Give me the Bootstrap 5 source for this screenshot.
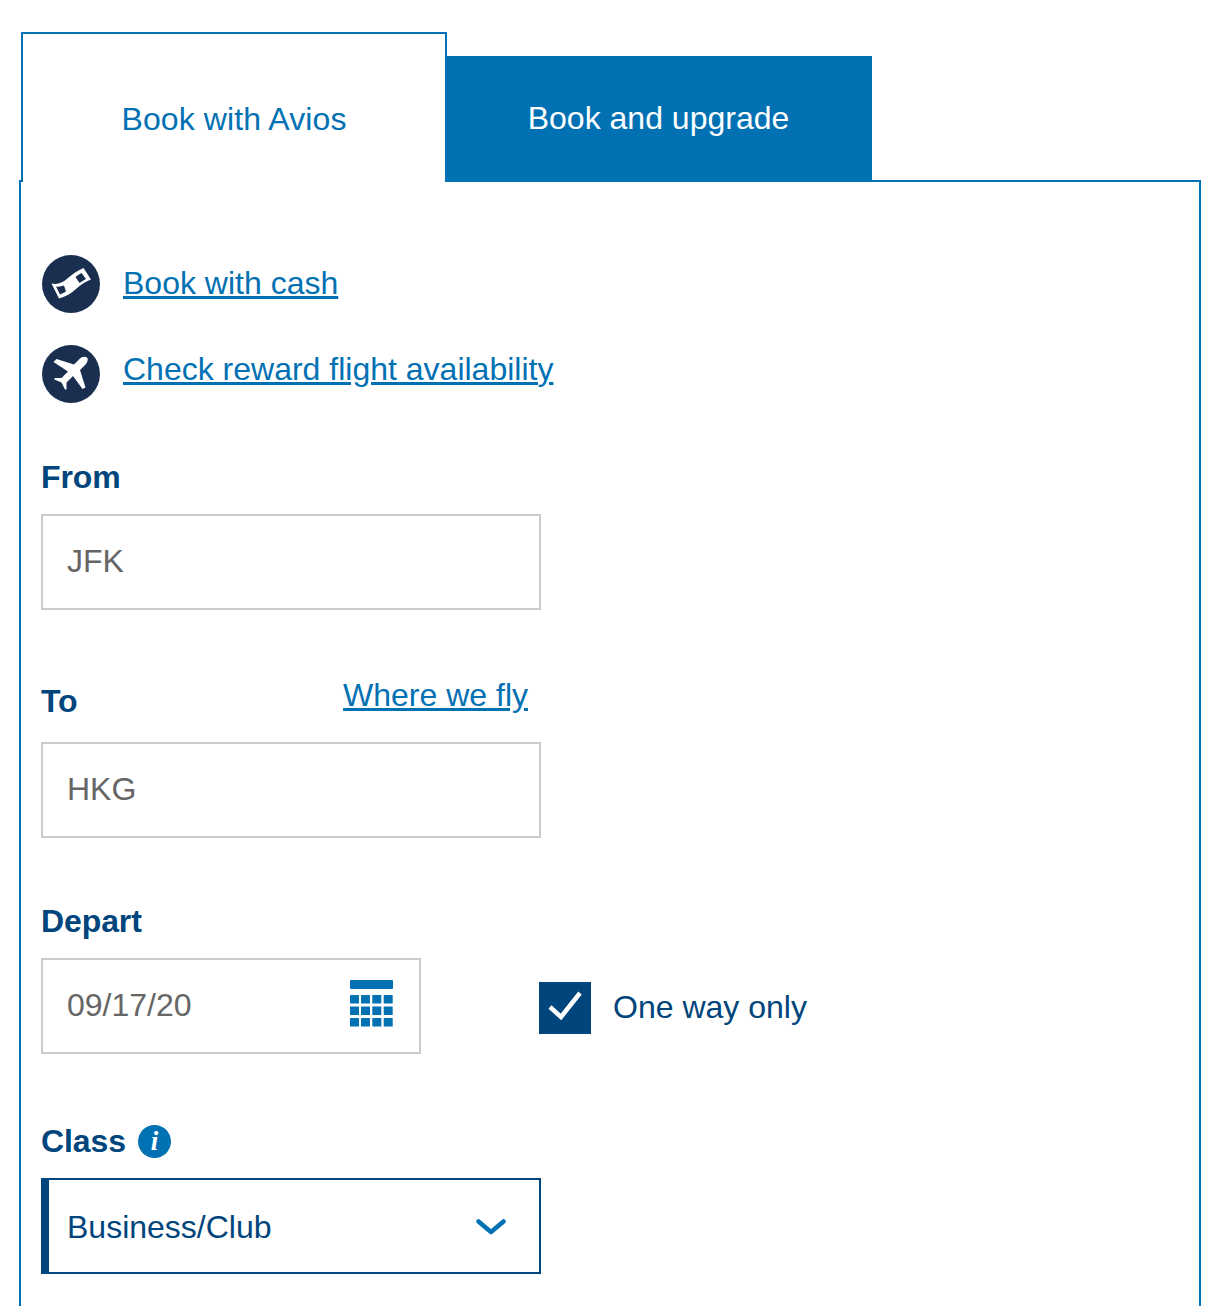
<!DOCTYPE html>
<html lang="en">
<head>
  <meta charset="UTF-8">
  <title>Book with Avios</title>
  <link href="https://cdn.jsdelivr.net/npm/bootstrap@5.3.3/dist/css/bootstrap.min.css" rel="stylesheet">
  <style>
    html, body { height: 1308px; overflow: hidden; }
    body { font-family: "Liberation Sans", Arial, sans-serif; font-size: 32px; color: #00457c; background: #fff; }
    a { color: #0271b3; }

    .booking { padding: 32px 19px 0 19px; }
    .tabs-row { height: 150px; align-items: flex-end; position: relative; z-index: 1; margin-bottom: -2px; }
    .tab-on, .tab-off { display: flex; align-items: center; justify-content: center; text-decoration: none; }
    .tab-on { width: 426px; height: 150px; margin-left: 2px; padding-top: 22px; border: 2px solid #0271b3; border-bottom: 0; background: #fff; color: #0271b3; letter-spacing: .1px; }
    .tab-off { width: 427px; height: 126px; margin-left: -2px; background: #0271b3; color: #fff; padding-bottom: 2px; }

    .panel-box { border: 2px solid #0271b3; border-bottom: 0; height: 1126px; padding: 72px 20px 0 20px; }

    .round-icon { width: 58px; height: 58px; margin: 1px 0 0 1px; border-radius: 50%; background: #1a2f50; flex-shrink: 0; }
    .link-row { gap: 23px; height: 59px; }
    .link-row + .link-row { margin-top: 31px; }
    .link-row a { position: relative; top: -1px; }
    .link-row + .link-row a { top: -5px; }

    .field-label { font-weight: 700; line-height: 36px; letter-spacing: -.1px; }
    .field-box { width: 500px; height: 96px; border: 2px solid #ccc; padding: 0 24px 2px; color: #666; display: flex; align-items: center; justify-content: space-between; }
    .from-group { margin-top: 56px; }
    .from-group .field-label { margin-bottom: 19px; }
    .to-group { margin-top: 70px; width: 500px; }
    .to-head { height: 62px; }
    .to-head a { margin-right: 13px; position: relative; top: -16px; }
    .to-head .field-label { position: relative; top: -10px; }
    .depart-group { margin-top: 65px; }
    .depart-group .field-label { margin-bottom: 19px; }
    .date-box { width: 380px; padding-right: 26px; }
    .date-box svg { margin-bottom: 3px; }
    .way-check { width: 52px; height: 52px; background: #00457c; flex-shrink: 0; }
    .way-row { margin-left: 118px; gap: 22px; position: relative; top: 2px; }
    .way-row span { position: relative; top: -1px; }
    .class-group { margin-top: 69px; }
    .class-head { gap: 12px; height: 36px; margin-bottom: 19px; }
    .info-dot { width: 33px; height: 33px; border-radius: 50%; background: #0271b3; color: #fff; font: italic 700 27px/33px "Liberation Serif", serif; text-align: center; }
    .class-select { width: 500px; height: 96px; border: 2px solid #00457c; border-left-width: 8px; padding: 2px 33px 0 18px; }
  </style>
</head>
<body>

  <div class="booking">
    <div class="tabs-row d-flex">
      <a class="tab-on" href="#">Book with Avios</a>
      <a class="tab-off" href="#">Book and upgrade</a>
    </div>

    <div class="panel-box">
      <div class="link-row d-flex align-items-center">
        <div class="round-icon">
          <svg class="d-block" width="58" height="58" viewBox="0 0 58 58">
            <path fill="#fff" d="M9.500 28.500C16 30 21 27.500 26 23C31 18.500 36 15.500 41.500 13L49 24.500C43.500 26.500 39 29.500 34.500 33.500C29 38.500 24 41.500 17 43.500Z"/>
            <path fill="#1a2f50" d="M14 31.500C17 32 19.500 31.500 22 30.500L24 36.500C22 37.700 20.500 38.500 18 39.500Z"/>
            <path fill="#1a2f50" d="M33.500 22C35.500 20.500 37.500 19 39.500 18L44 24C41.500 25.200 39.500 26.500 37.500 28Z"/>
          </svg>
        </div>
        <a href="#">Book with cash</a>
      </div>
      <div class="link-row d-flex align-items-center">
        <div class="round-icon">
          <svg class="d-block" width="58" height="58" viewBox="0 0 58 58">
            <path fill="#fff" d="M45 12.500C46.500 14 45.500 17.500 43.500 19.500L38 25L43.500 42.500L40.500 44L31 31L24.500 37.500L24.500 44.500L23 44.500L19.500 37.500L12.500 34.500L12.500 33L19.500 33L26 26.500L11.500 17L14.500 14L32 19.500L37.500 14C39.500 12 43 11 45 12.500Z"/>
          </svg>
        </div>
        <a href="#">Check reward flight availability</a>
      </div>

      <div class="from-group">
        <div class="field-label">From</div>
        <div class="field-box">JFK</div>
      </div>

      <div class="to-group">
        <div class="to-head d-flex justify-content-between align-items-center">
          <span class="field-label">To</span>
          <a href="#">Where we fly</a>
        </div>
        <div class="field-box">HKG</div>
      </div>

      <div class="depart-group">
        <div class="field-label">Depart</div>
        <div class="d-flex align-items-center">
          <div class="field-box date-box">
            <span>09/17/20</span>
            <svg width="43" height="47" viewBox="0 0 43 47" fill="#0271b3">
              <rect x="0" y="0" width="43" height="9" rx="1"/>
              <rect x="0" y="15" width="9" height="8.500" rx=".5"/><rect x="11" y="15" width="9" height="8.500" rx=".5"/><rect x="22.300" y="15" width="9" height="8.500" rx=".5"/><rect x="33.700" y="15" width="9" height="8.500" rx=".5"/>
              <rect x="0" y="26.500" width="9" height="8.500" rx=".5"/><rect x="11" y="26.500" width="9" height="8.500" rx=".5"/><rect x="22.300" y="26.500" width="9" height="8.500" rx=".5"/><rect x="33.700" y="26.500" width="9" height="8.500" rx=".5"/>
              <rect x="0" y="38" width="9" height="8.500" rx=".5"/><rect x="11" y="38" width="9" height="8.500" rx=".5"/><rect x="22.300" y="38" width="9" height="8.500" rx=".5"/><rect x="33.700" y="38" width="9" height="8.500" rx=".5"/>
            </svg>
          </div>
          <div class="way-row d-flex align-items-center">
            <div class="way-check">
              <svg class="d-block" width="52" height="52" viewBox="0 0 52 52"><path d="M11 25l11 10 19-24" fill="none" stroke="#fff" stroke-width="4.500"/></svg>
            </div>
            <span>One way only</span>
          </div>
        </div>
      </div>

      <div class="class-group">
        <div class="class-head d-flex align-items-center">
          <span class="field-label">Class</span>
          <span class="info-dot">i</span>
        </div>
        <div class="class-select d-flex align-items-center justify-content-between">
          <span>Business/Club</span>
          <svg width="30" height="16" viewBox="0 0 30 16"><path d="M2.500 2.500L15 13 27.500 2.500" fill="none" stroke="#0271b3" stroke-width="4.500" stroke-linecap="round" stroke-linejoin="round"/></svg>
        </div>
      </div>
    </div>
  </div>

  <script src="https://cdn.jsdelivr.net/npm/bootstrap@5.3.3/dist/js/bootstrap.bundle.min.js"></script>
</body>
</html>
